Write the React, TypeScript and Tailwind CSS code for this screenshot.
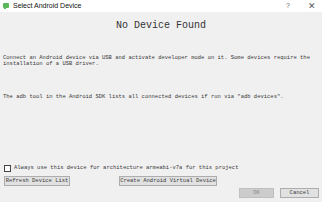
export default function App() {
  const mono = { fontFamily: '"Liberation Mono", "DejaVu Sans Mono", monospace' }

  return (
    <div className="w-[322px] h-[202px] bg-[#f0f0f0] flex flex-col overflow-hidden text-[#3a3a3a]" style={mono}>
      {/* title bar */}
      <div
        className="h-[12px] bg-white flex items-center pl-[3px] pr-[6px] shrink-0"
        style={{ fontFamily: '"Liberation Sans", Arial, sans-serif' }}
      >
        <svg width="6" height="6" viewBox="0 0 6 6" className="shrink-0">
          <rect x="0" y="0" width="6" height="5" rx="1" fill="#5cb85c" />
          <rect x="1" y="4" width="2" height="2" fill="#5cb85c" />
        </svg>
        <span className="ml-[4px] text-[7px] leading-[12px] text-[#111]">Select Android Device</span>
        <span className="ml-auto text-[7px] leading-[12px] text-[#666]">?</span>
        <span className="ml-[18px] text-[9px] leading-[12px] text-[#555]">✕</span>
      </div>

      <div className="flex-1 flex flex-col px-[3px]">
        <div className="mt-[8px] text-center text-[10px] leading-[12px] text-[#333]">No Device Found</div>

        <p className="mt-[23px] text-[5.5px] leading-[6px]">
          Connect an Android device via USB and activate developer mode on it. Some devices require the installation
          of a USB driver.
        </p>

        <p className="mt-[27px] text-[5.5px] leading-[6px]">
          The adb tool in the Android SDK lists all connected devices if run via "adb devices".
        </p>

        <div className="mt-[64px] flex items-center h-[8px] pl-[1px]">
          <div className="w-[7px] h-[7px] bg-white border border-[#444] shrink-0" />
          <span className="ml-[3px] text-[5.5px] leading-[8px]">
            Always use this device for architecture armeabi-v7a for this project
          </span>
        </div>

        <div className="mt-[4px] flex items-center pl-[1px]">
          <button className="w-[66px] h-[10px] bg-[#e1e1e1] border border-[#adadad] text-[5.5px] leading-[8px] text-[#3a3a3a]">
            Refresh Device List
          </button>
          <button className="ml-[49px] w-[98px] h-[10px] bg-[#e1e1e1] border border-[#adadad] text-[5.5px] leading-[8px] text-[#3a3a3a]">
            Create Android Virtual Device
          </button>
        </div>

        <div className="mt-[2px] flex justify-end gap-[6px]">
          <button className="w-[35px] h-[10px] bg-[#cccccc] border border-[#bfbfbf] text-[5.5px] leading-[8px] text-[#8a8a8a]">
            OK
          </button>
          <button className="w-[39px] h-[10px] bg-[#e1e1e1] border border-[#adadad] text-[5.5px] leading-[8px] text-[#3a3a3a]">
            Cancel
          </button>
        </div>
      </div>
    </div>
  )
}
